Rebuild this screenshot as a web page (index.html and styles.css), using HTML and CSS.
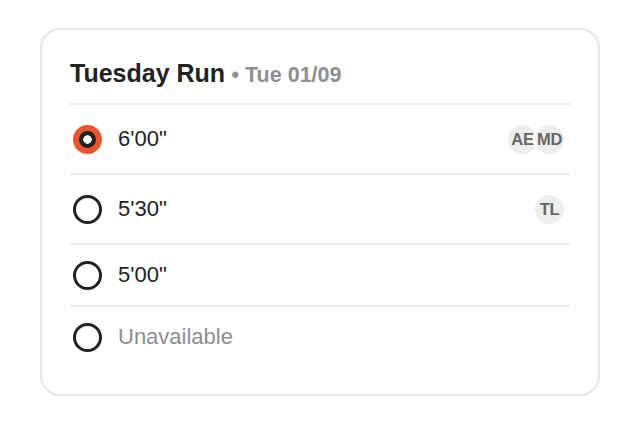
FILE: index.html
```html
<!DOCTYPE html>
<html>
<head>
<meta charset="utf-8">
<link rel="stylesheet" href="styles.css">
</head>
<body>
<div class="card">
  <div class="title"><span class="name">Tuesday Run</span> <span class="sub">• Tue 01/09</span></div>
  <div class="row">
    <span class="radio selected"></span>
    <span class="label">6'00"</span>
    <span class="avatars">
      <span class="avatar">AE</span>
      <span class="avatar">MD</span>
    </span>
  </div>
  <div class="row">
    <span class="radio"></span>
    <span class="label">5'30"</span>
    <span class="avatars">
      <span class="avatar">TL</span>
    </span>
  </div>
  <div class="row">
    <span class="radio"></span>
    <span class="label">5'00"</span>
  </div>
  <div class="row">
    <span class="radio"></span>
    <span class="label muted">Unavailable</span>
  </div>
</div>
</body>
</html>
```

FILE: styles.css
```css
html, body {
  margin: 0;
  padding: 0;
  background: #fff;
}
body {
  padding: 28px 40px;
  font-family: "Liberation Sans", Arial, sans-serif;
  color: #222;
}
.card {
  width: 500px;
  border: 2px solid #e6e6e6;
  border-radius: 20px;
  padding: 29px 28px 27px 28px;
}
.title {
  line-height: 28px;
  padding-bottom: 12px;
  border-bottom: 2px solid #ececec;
  white-space: nowrap;
}
.name {
  font-size: 25px;
  font-weight: bold;
  color: #222;
}
.sub {
  font-size: 21.5px;
  font-weight: bold;
  color: #8e8e93;
  margin-left: 2px;
}
.row {
  display: flex;
  align-items: center;
  min-height: 30px;
  padding: 15px 0 15px 3px;
  border-bottom: 2px solid #ececec;
}
.row:last-child {
  border-bottom: none;
}
.radio {
  flex: none;
  width: 29px;
  height: 29px;
  box-sizing: border-box;
  border-radius: 50%;
  border: 3px solid #222;
  margin-right: 16px;
}
.radio.selected {
  border: 6px solid #e9552e;
  background: radial-gradient(circle, #fff 0 4px, #222 4.5px);
}
.label {
  font-size: 22px;
  line-height: 30px;
  color: #222;
}
.label.muted {
  color: #8e8e93;
}
.avatars {
  margin-left: auto;
  display: flex;
  align-items: center;
  height: 38px;
  padding-right: 4px;
}
.avatar {
  width: 29px;
  height: 29px;
  border-radius: 50%;
  border: 2px solid #fff;
  background: #eeeeee;
  color: #666;
  font-size: 16.5px;
  font-weight: bold;
  display: flex;
  align-items: center;
  justify-content: center;
  overflow: hidden;
  white-space: nowrap;
  letter-spacing: -0.3px;
}
.avatar + .avatar {
  margin-left: -6px;
}
```
